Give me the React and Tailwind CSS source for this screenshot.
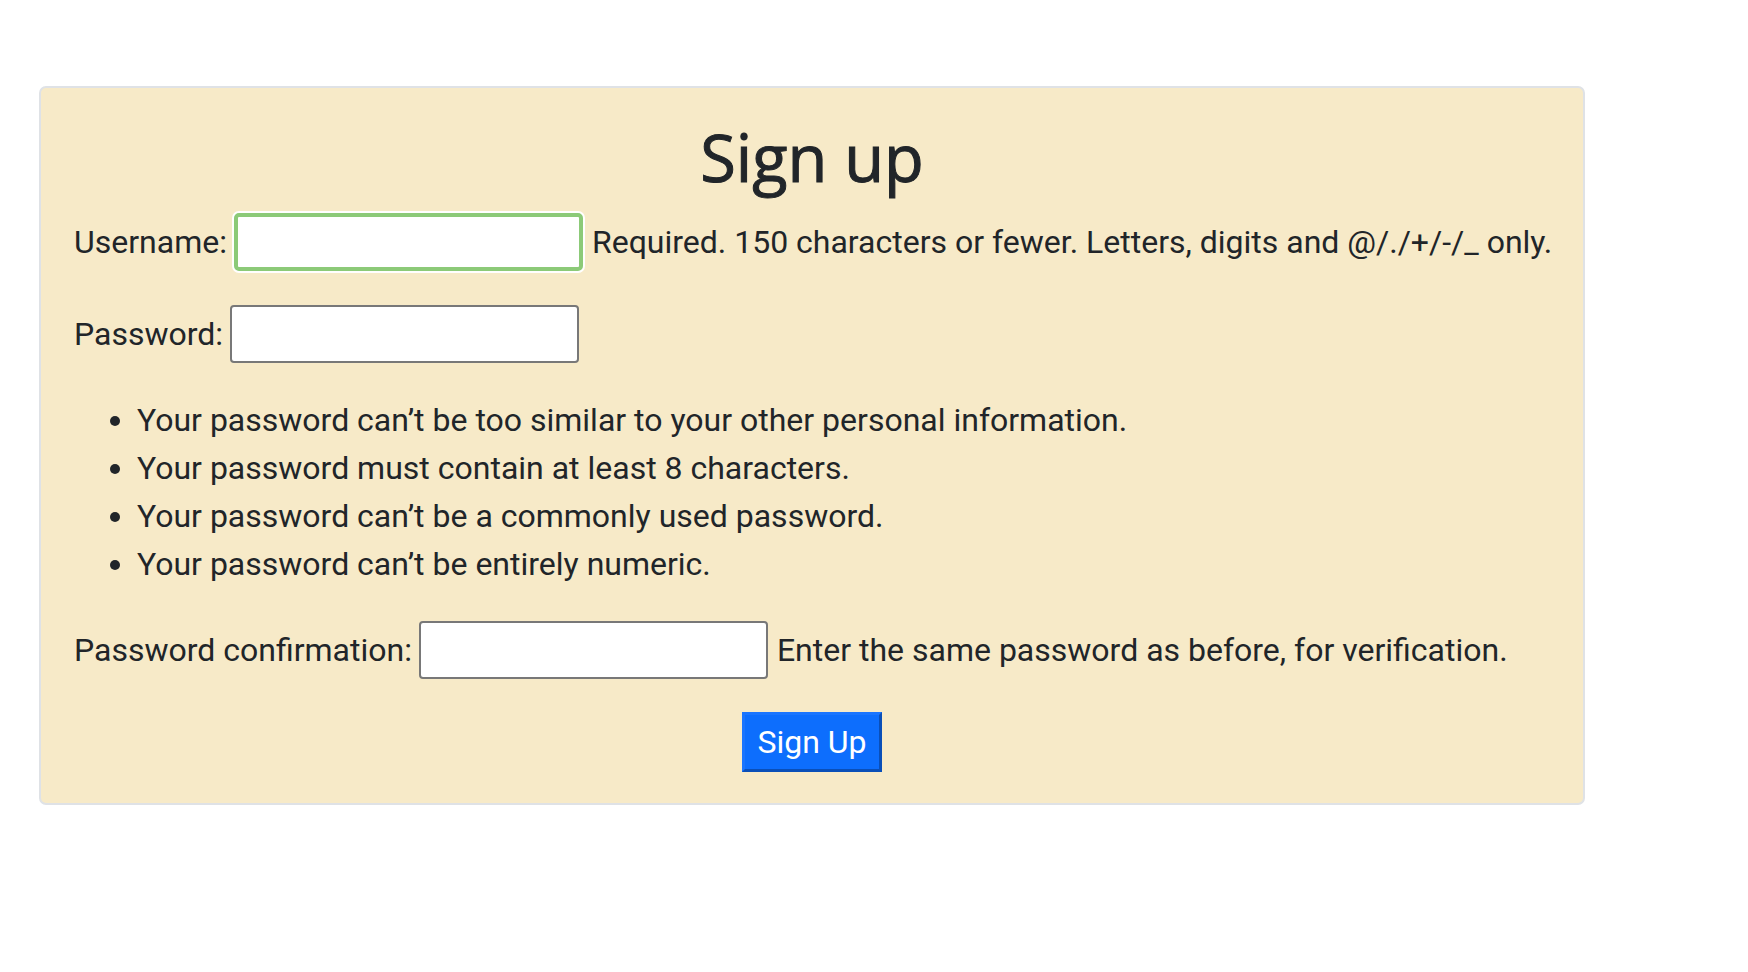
import React from 'react';

const hints = [
  'Your password can\u2019t be too similar to your other personal information.',
  'Your password must contain at least 8 characters.',
  'Your password can\u2019t be a commonly used password.',
  'Your password can\u2019t be entirely numeric.',
];

const Field = ({ label, help, focused }) => (
  <div className="flex items-center h-[58px]">
    <label className="whitespace-nowrap">{label}</label>
    {focused ? (
      <input
        type="text"
        className="ml-[7px] w-[349px] h-[58px] bg-white border-[4px] border-[#8cca78] rounded-[5px] shadow-[0_0_0_2px_#ffffff] outline-none"
      />
    ) : (
      <input
        type="password"
        className="ml-[7px] w-[349px] h-[58px] bg-white border-2 border-[#787878] rounded-[4px] outline-none"
      />
    )}
    {help && <span className="ml-[9px] whitespace-nowrap">{help}</span>}
  </div>
);

export default function App() {
  return (
    <div className="min-h-screen bg-white pt-[86px] pl-[39px] font-['Roboto',sans-serif] text-[#212529]">
      <div className="w-[1546px] bg-[#f7eac8] border-2 border-[#dfe2e6] rounded-[7px] pt-[30px] pb-[31px] px-[33px] text-[32px] leading-[1.5]">
        {/* Title */}
        <h1 className="text-center font-['Open_Sans',sans-serif] font-medium text-[65px] leading-[1.2] mb-[17px] [-webkit-text-stroke:1px_#212529]">
          Sign up
        </h1>

        <Field
          label="Username:"
          focused
          help="Required. 150 characters or fewer. Letters, digits and @/./+/-/_ only."
        />

        <div className="mt-[34px]">
          <Field label="Password:" />
        </div>

        {/* Password rules */}
        <ul className="list-disc pl-[63px] mt-[33px] leading-[48px]">
          {hints.map((h) => (
            <li key={h}>{h}</li>
          ))}
        </ul>

        <div className="mt-[33px]">
          <Field
            label="Password confirmation:"
            help="Enter the same password as before, for verification."
          />
        </div>

        <div className="flex justify-center mt-[33px]">
          <button className="w-[140px] h-[60px] bg-[#0d6efd] text-white border-[3px] border-[#1a75ff] border-b-[#0a4fb8] border-r-[#0a4fb8] leading-none">
            Sign Up
          </button>
        </div>
      </div>
    </div>
  );
}
